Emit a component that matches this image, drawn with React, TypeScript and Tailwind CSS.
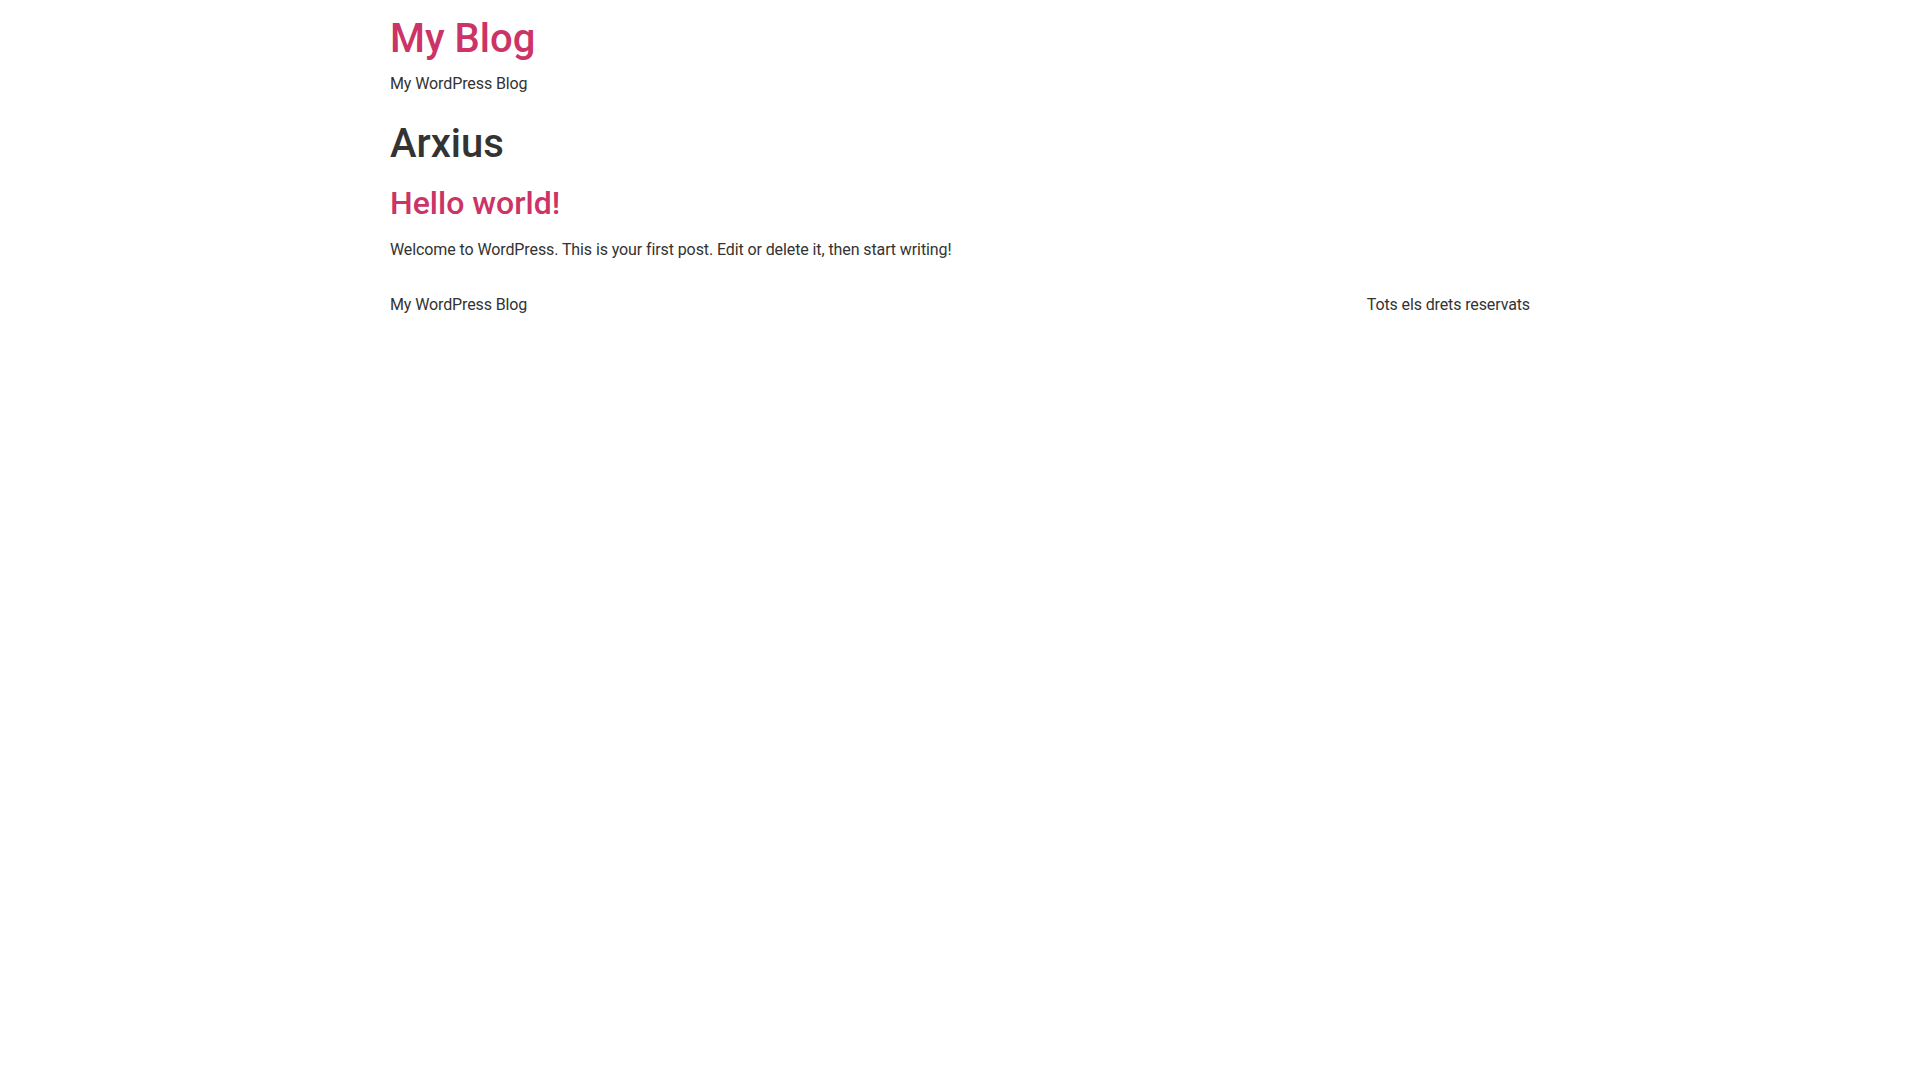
import React from 'react'

export default function App() {
  return (
    <div className="min-h-screen bg-white text-[#333333] font-['Roboto','Liberation_Sans',sans-serif]">
      <div className="mx-auto w-[1140px]">
        {/* Header */}
        <header className="pt-[15px]">
          <h1 className="text-[40px] leading-[1.2] font-medium">
            <a href="#" className="text-[#cc3366]">My Blog</a>
          </h1>
          <p className="mt-[9px] text-base leading-6 tracking-[-0.1px]">My WordPress Blog</p>
        </header>

        {/* Archive */}
        <main>
          <h1 className="mt-6 text-[40px] leading-[1.2] font-medium">Arxius</h1>
          <article>
            <h2 className="mt-4 text-[32px] leading-[1.2] font-medium">
              <a href="#" className="text-[#cc3366]">Hello world!</a>
            </h2>
            <p className="mt-4 text-base leading-6 tracking-[-0.1px]">
              Welcome to WordPress. This is your first post. Edit or delete it, then start writing!
            </p>
          </article>
        </main>

        {/* Footer */}
        <footer className="mt-[31px] flex justify-between text-base leading-6 tracking-[-0.12px]">
          <p>My WordPress Blog</p>
          <p>Tots els drets reservats</p>
        </footer>
      </div>
    </div>
  )
}
